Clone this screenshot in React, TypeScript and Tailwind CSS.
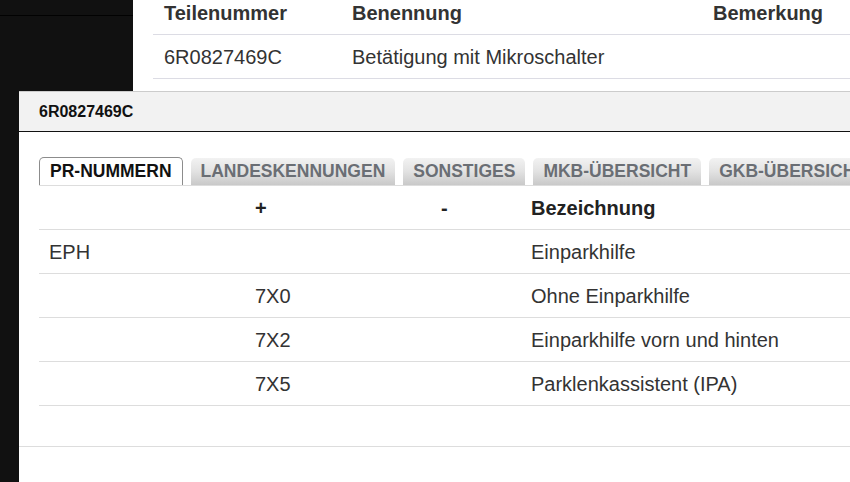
import React from "react";

const font = { fontFamily: '"Liberation Sans", Arial, sans-serif' };

const rows = [
  { a: "EPH", b: "", c: "", d: "Einparkhilfe" },
  { a: "", b: "7X0", c: "", d: "Ohne Einparkhilfe" },
  { a: "", b: "7X2", c: "", d: "Einparkhilfe vorn und hinten" },
  { a: "", b: "7X5", c: "", d: "Parklenkassistent (IPA)" },
];

const tabs = ["LANDESKENNUNGEN", "SONSTIGES", "MKB-ÜBERSICHT", "GKB-ÜBERSICHT"];

export default function App() {
  return (
    <div
      className="relative w-[850px] h-[482px] overflow-hidden bg-white flex"
      style={font}
    >
      {/* sidebar */}
      <div className="w-[133px] shrink-0 bg-[#111111] flex flex-col">
        <div className="h-[15px]" />
        <div className="h-px bg-[#020202]" />
      </div>

      {/* background content */}
      <div className="flex-1 pl-[20px] -mt-[9px]">
        <div className="flex h-[44px] items-center border-b border-[#dcdce4] text-[20px] font-bold text-[#333]">
          <div className="w-[189px] pl-[11px] shrink-0">Teilenummer</div>
          <div className="w-[361px] pl-[10px] shrink-0">Benennung</div>
          <div className="pl-[10px]">Bemerkung</div>
        </div>
        <div className="flex h-[44px] items-center border-b border-[#dcdce4] text-[20px] text-[#333]">
          <div className="w-[189px] pl-[11px] shrink-0">6R0827469C</div>
          <div className="w-[361px] pl-[10px] shrink-0">Betätigung mit Mikroschalter</div>
          <div className="pl-[10px]"></div>
        </div>
      </div>

      {/* modal */}
      <div className="absolute left-[19px] top-[91px] w-[900px] h-[420px] bg-white border-t border-[#cccccc] flex flex-col">
        <div className="h-[40px] bg-[#f2f2f2] border-b border-[#111] flex items-center pl-[20px] text-[16px] font-bold text-[#111]">
          6R0827469C
        </div>
        <div className="pt-[25px] pl-[20px]">
          {/* tabs */}
          <div className="flex gap-[8px] items-end border-b border-[#dddddd] h-[29px]">
            <div className="h-[28px] px-[10px] border border-b-0 border-[#8c8c8c] rounded-t-[5px] bg-white flex items-center text-[17.5px] font-bold text-[#111] shrink-0">
              PR-NUMMERN
            </div>
            {tabs.map((t) => (
              <div
                key={t}
                className="h-[27px] px-[10px] rounded-t-[5px] bg-linear-to-b from-[#f2f2f2] via-[#e2e2e2] to-[#c9c9c9] flex items-center text-[17.5px] font-bold text-[#6a6e74] shrink-0"
              >
                {t}
              </div>
            ))}
          </div>
          {/* table */}
          <div className="text-[20px] text-[#333]">
            <div className="flex h-[44px] items-center border-b border-[#dddddd] font-bold text-[#222]">
              <div className="w-[206px] pl-[10px] shrink-0"></div>
              <div className="w-[186px] pl-[10px] shrink-0">+</div>
              <div className="w-[90px] pl-[10px] shrink-0">-</div>
              <div className="pl-[10px]">Bezeichnung</div>
            </div>
            {rows.map((r, i) => (
              <div key={i} className="flex h-[44px] items-center border-b border-[#dddddd]">
                <div className="w-[206px] pl-[10px] shrink-0">{r.a}</div>
                <div className="w-[186px] pl-[10px] shrink-0">{r.b}</div>
                <div className="w-[90px] pl-[10px] shrink-0">{r.c}</div>
                <div className="pl-[10px]">{r.d}</div>
              </div>
            ))}
          </div>
        </div>
        <div className="mt-[40px] border-t border-[#dddddd]" />
      </div>
    </div>
  );
}
